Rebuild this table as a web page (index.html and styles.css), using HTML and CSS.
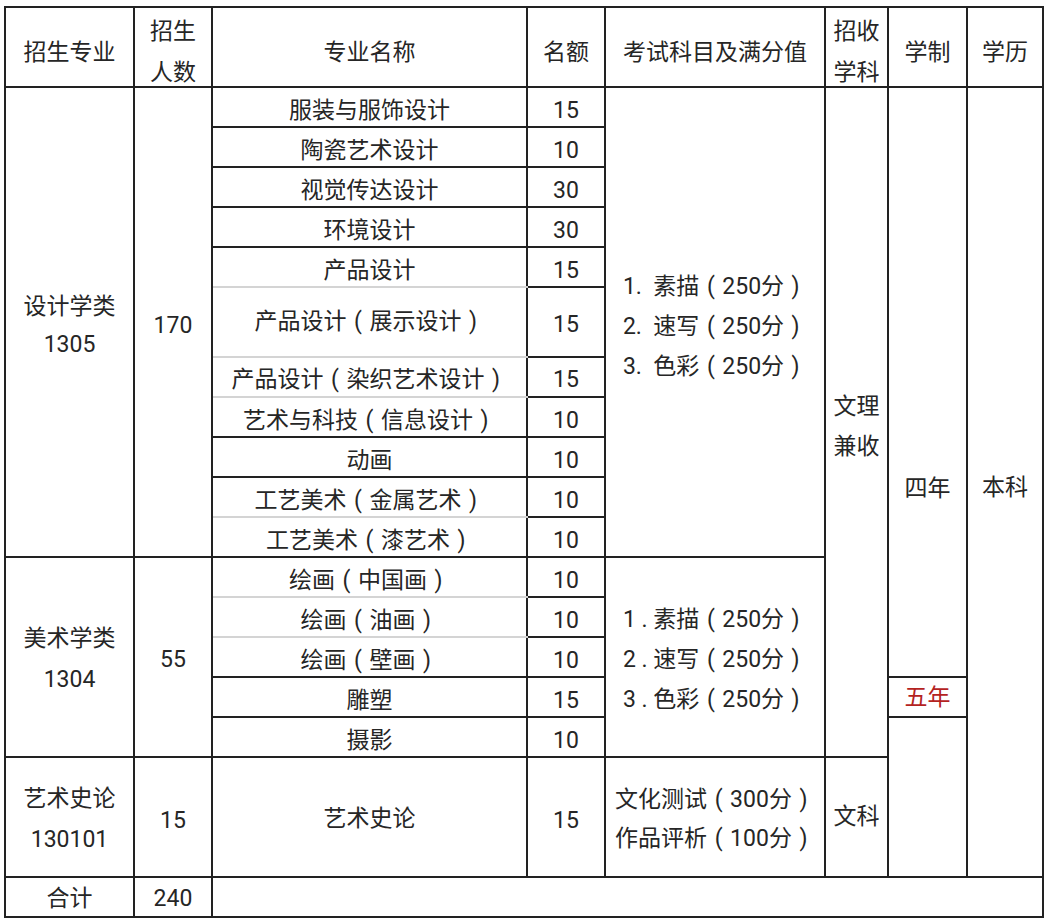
FILE: index.html
```html
<!DOCTYPE html>
<html lang="zh-CN">
<head>
<meta charset="utf-8">
<title>招生计划</title>
<link rel="stylesheet" href="styles.css">
</head>
<body>
<table class="plan">
  <colgroup>
    <col class="c1"><col class="c2"><col class="c3"><col class="c4"><col class="c5"><col class="c6"><col class="c7"><col class="c8">
  </colgroup>
  <tr class="head">
    <td>招生专业</td>
    <td class="hd2"><div class="two">招生<br>人数</div></td>
    <td>专业名称</td>
    <td>名额</td>
    <td>考试科目及满分值</td>
    <td class="hd2"><div class="two">招收<br>学科</div></td>
    <td>学制</td>
    <td>学历</td>
  </tr>
  <tr class="r">
    <td rowspan="11" class="lh38">设计学类<br>1305</td>
    <td rowspan="11">170</td>
    <td>服装与服饰设计</td>
    <td>15</td>
    <td rowspan="11" class="pt10"><div class="list">1.&nbsp;&nbsp;素描<span class="p">(</span>250分<span class="p">)</span><br>2.&nbsp;&nbsp;速写<span class="p">(</span>250分<span class="p">)</span><br>3.&nbsp;&nbsp;色彩<span class="p">(</span>250分<span class="p">)</span></div></td>
    <td rowspan="16" class="lh40 pt10">文理<br>兼收</td>
    <td rowspan="14" class="four">四年</td>
    <td rowspan="17" class="degree">本科</td>
  </tr>
  <tr class="r"><td>陶瓷艺术设计</td><td>10</td></tr>
  <tr class="r"><td>视觉传达设计</td><td>30</td></tr>
  <tr class="r"><td>环境设计</td><td>30</td></tr>
  <tr class="r"><td class="gb">产品设计</td><td>15</td></tr>
  <tr class="tall"><td class="gb pt0">产品设计<span class="p">(</span>展示设计<span class="p">)</span></td><td class="pt5">15</td></tr>
  <tr class="r"><td class="gb pt6">产品设计<span class="p">(</span>染织艺术设计<span class="p">)</span></td><td class="pt6">15</td></tr>
  <tr class="r"><td>艺术与科技<span class="p">(</span>信息设计<span class="p">)</span></td><td>10</td></tr>
  <tr class="r"><td>动画</td><td>10</td></tr>
  <tr class="r"><td class="gb">工艺美术<span class="p">(</span>金属艺术<span class="p">)</span></td><td>10</td></tr>
  <tr class="r"><td>工艺美术<span class="p">(</span>漆艺术<span class="p">)</span></td><td>10</td></tr>
  <tr class="r">
    <td rowspan="5" class="lh41 pt4">美术学类<br>1304</td>
    <td rowspan="5" class="pt6">55</td>
    <td class="gb">绘画<span class="p">(</span>中国画<span class="p">)</span></td>
    <td>10</td>
    <td rowspan="5" class="pt6"><div class="list">1 . 素描<span class="p">(</span>250分<span class="p">)</span><br>2 . 速写<span class="p">(</span>250分<span class="p">)</span><br>3 . 色彩<span class="p">(</span>250分<span class="p">)</span></div></td>
  </tr>
  <tr class="r"><td class="gb">绘画<span class="p">(</span>油画<span class="p">)</span></td><td>10</td></tr>
  <tr class="r"><td>绘画<span class="p">(</span>壁画<span class="p">)</span></td><td>10</td></tr>
  <tr class="r"><td>雕塑</td><td>15</td><td class="five">五年</td></tr>
  <tr class="r"><td>摄影</td><td>10</td><td rowspan="2"></td></tr>
  <tr class="big">
    <td class="lh41 pt3">艺术史论<br>130101</td>
    <td>15</td>
    <td class="pt4">艺术史论</td>
    <td>15</td>
    <td class="pt3"><div class="list lh39">文化测试<span class="p">(</span>300分<span class="p">)</span><br>作品评析<span class="p">(</span>100分<span class="p">)</span></div></td>
    <td class="pt0">文科</td>
  </tr>
  <tr class="r">
    <td class="pt4">合计</td>
    <td class="pt4">240</td>
    <td colspan="6"></td>
  </tr>
</table>
</body>
</html>
```

FILE: styles.css
```css
html, body {
  margin: 0;
  padding: 0;
  background: #ffffff;
}

body {
  font-family: Roboto, "Noto Sans CJK SC", sans-serif;
  color: #262626;
  font-size: 23px;
}

.plan {
  border-collapse: collapse;
  table-layout: fixed;
  width: 1040px;
  margin: 6px 0 0 4px;
}

.c1 { width: 129px; }
.c2 { width: 78px; }
.c3 { width: 315px; }
.c4 { width: 78px; }
.c5 { width: 220px; }
.c6 { width: 63px; }
.c7 { width: 79px; }
.c8 { width: 76px; }

.plan td {
  border: 2px solid #222222;
  padding: 8px 0 0 0;
  text-align: center;
  vertical-align: middle;
  line-height: 30px;
  white-space: nowrap;
}

.plan td.gb {
  border-bottom-color: #d4d4d4;
}

.head { height: 80px; }
.r { height: 40px; }
.tall { height: 70px; }
.big { height: 120px; }

.head td { padding-top: 11px; }

.plan td.hd2 {
  padding-top: 0;
  vertical-align: top;
}

.two {
  line-height: 41px;
  margin-top: 3px;
  margin-bottom: -7px;
}

.plan td.lh38 { line-height: 38px; }
.plan td.lh40 { line-height: 40px; }
.plan td.lh41 { line-height: 41px; }

.plan td.pt0 { padding-top: 0; }
.plan td.pt3 { padding-top: 3px; }
.plan td.pt4 { padding-top: 4px; }
.plan td.pt5 { padding-top: 5px; }
.plan td.pt6 { padding-top: 6px; }
.plan td.pt10 { padding-top: 10px; }

.p {
  display: inline-block;
  width: 1em;
  text-align: center;
}

.list {
  display: inline-block;
  text-align: left;
  line-height: 40px;
}

.list.lh39 { line-height: 39px; }

.plan td.four {
  vertical-align: top;
  padding-top: 386px;
  line-height: 30px;
}

.plan td.degree {
  padding-top: 12px;
}

.plan td.five {
  padding-top: 2px;
  color: #b4231f;
}
```
